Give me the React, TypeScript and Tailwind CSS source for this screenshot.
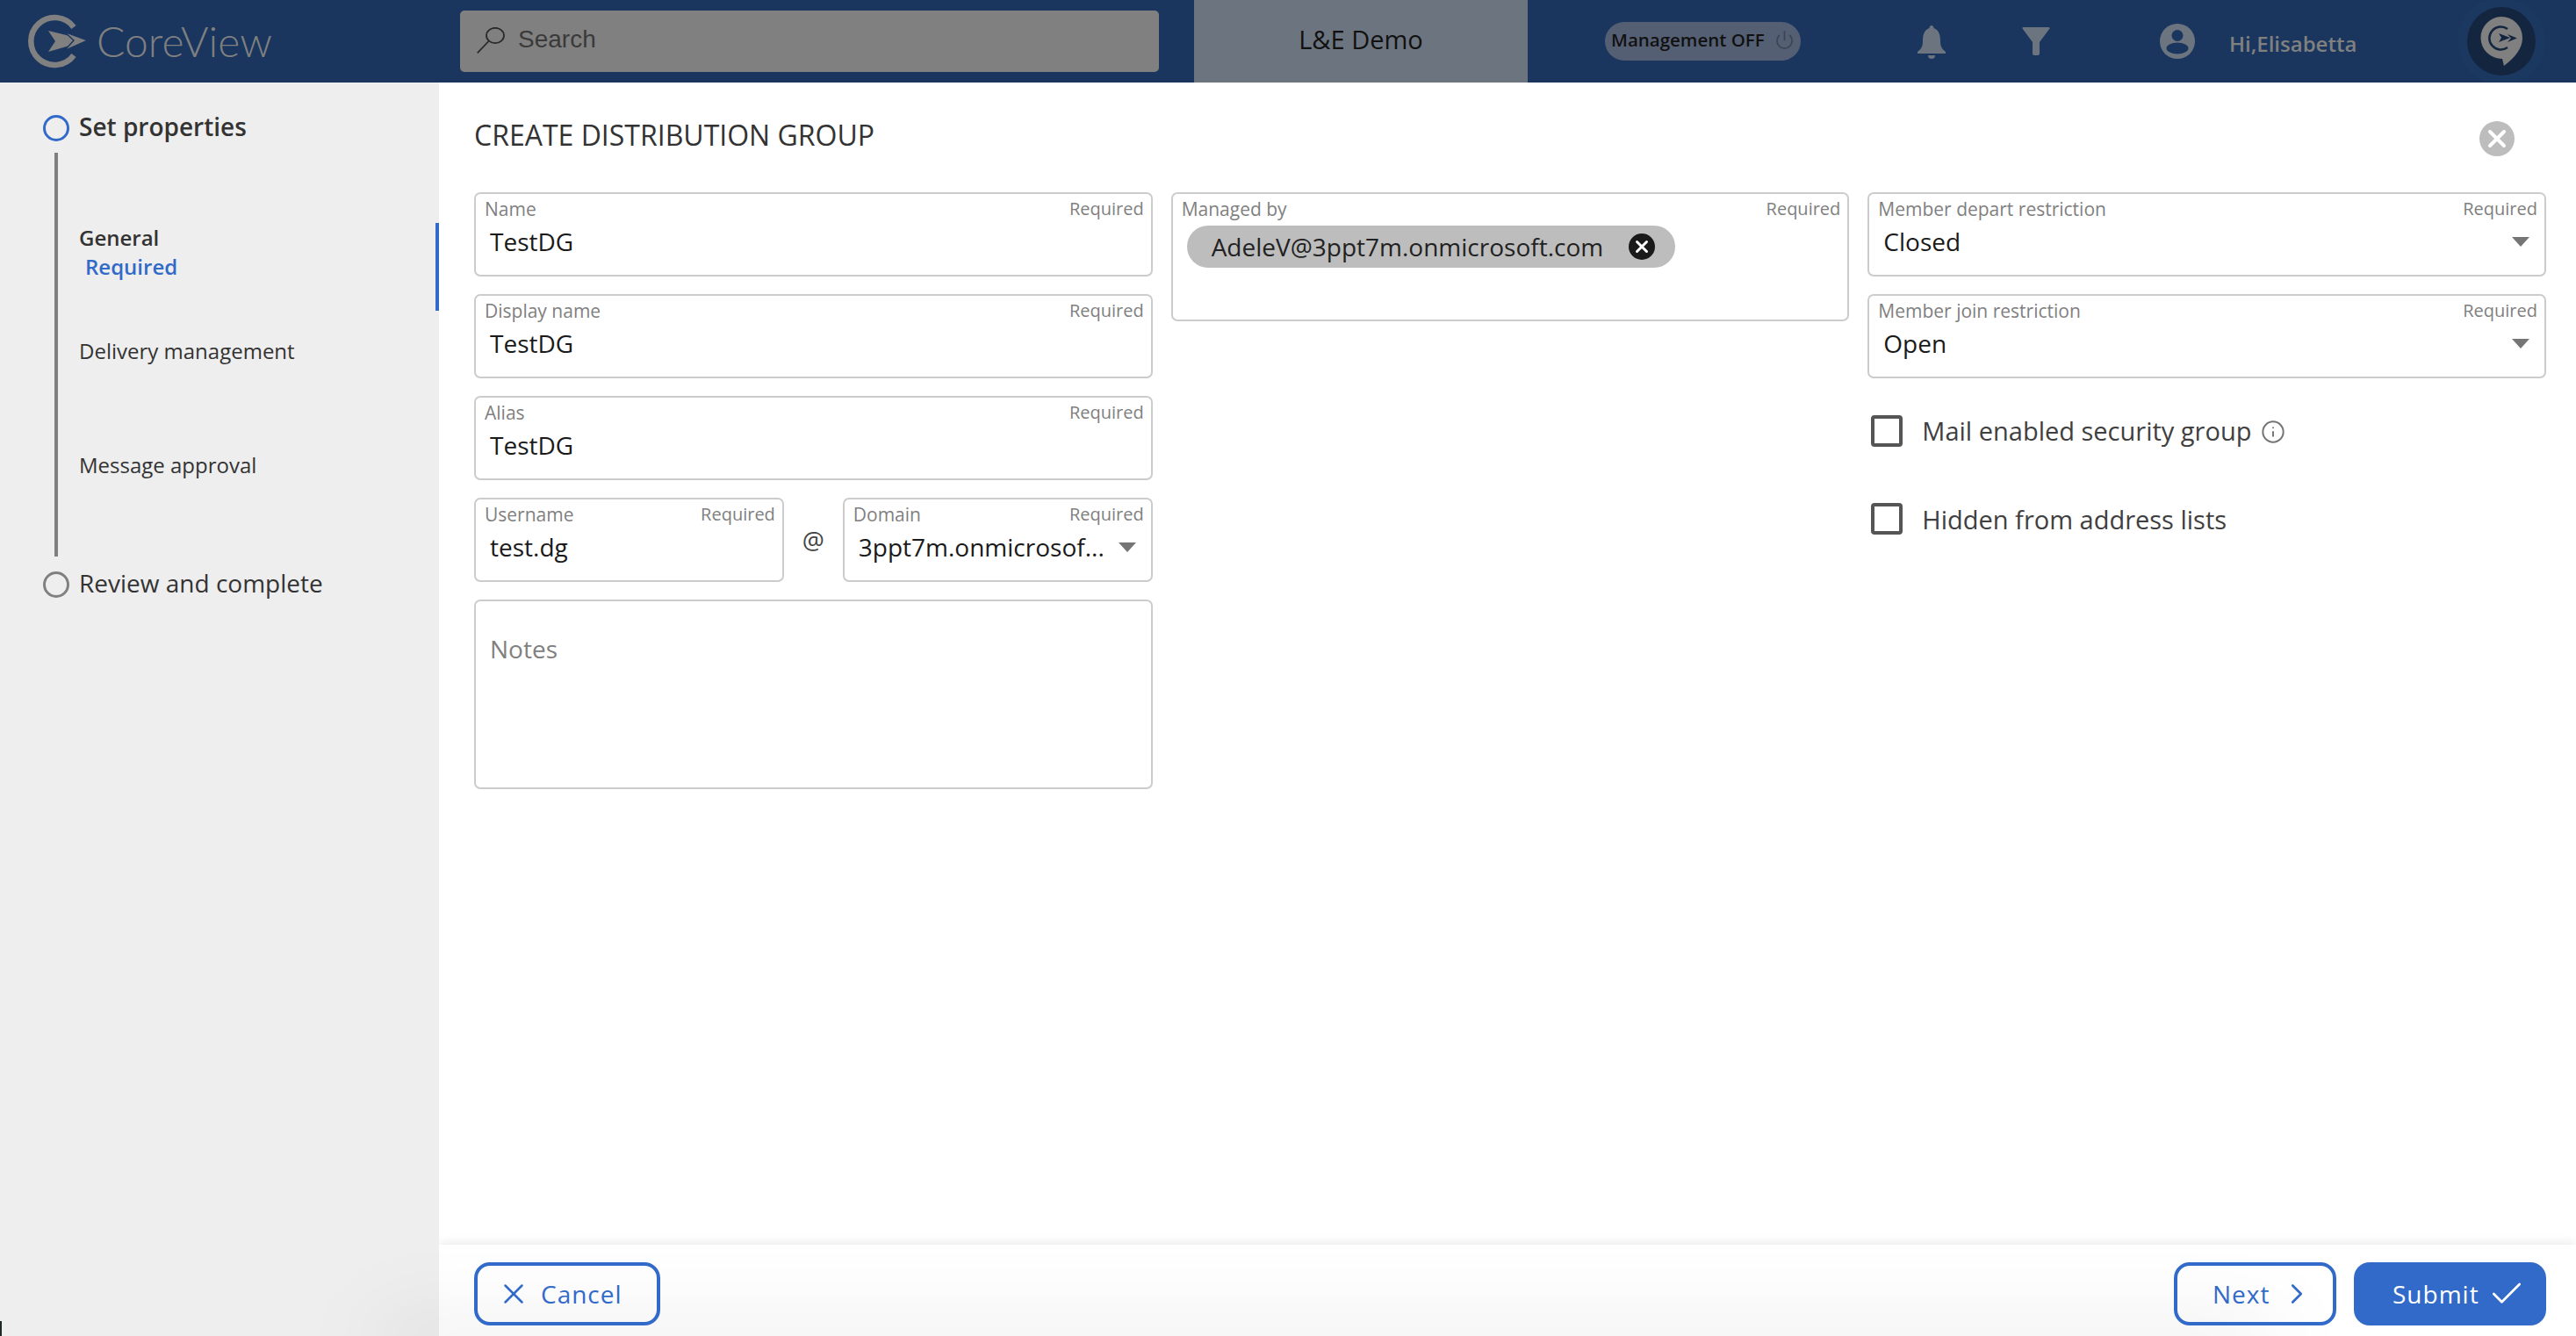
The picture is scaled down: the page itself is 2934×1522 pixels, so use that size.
import { Power, X, ChevronRight, Check, Info } from "lucide-react";

function CoreViewLogo() {
  return (
    <svg width="72" height="64" viewBox="30 12 72 64" className="shrink-0">
      <path d="M84 28 A27 27 0 1 0 84 60" fill="none" stroke="#808080" strokeWidth="6.5" />
      <path d="M55 32 L100 43 L55 56 L63 44 Z" fill="#808080" />
      <path d="M73 33 L100 43 L73 55 L84 43 Z" fill="#808080" stroke="#1a365f" strokeWidth="1.5" />
    </svg>
  );
}

function ChatLogo() {
  return (
    <svg width="48" height="56" viewBox="0 0 48 56">
      <path d="M24 0 A24 24 0 0 1 48 24 C48 36 40 46 27 56 L25 48 A24 24 0 0 1 24 0 Z" fill="#808080" />
      <path d="M31 14 A13 13 0 1 0 31 35" fill="none" stroke="#14253f" strokeWidth="2.5" />
      <path d="M21 19 L34 24 L21 29 L24 24 Z" fill="#14253f" />
      <path d="M31 20 L42 24.500 L31 29 L35 24.500 Z" fill="#14253f" />
    </svg>
  );
}

function SearchGlass() {
  return (
    <svg width="32" height="30" viewBox="0 0 32 30" fill="none" stroke="#2a2a2a" strokeWidth="1.8" className="shrink-0">
      <ellipse cx="21" cy="9.500" rx="10" ry="8.700" />
      <path d="M13.500 16 L0.800 29.300" />
    </svg>
  );
}

function Bell() {
  return (
    <svg width="32" height="39" viewBox="0 0 32 39" fill="#6c757f">
      <path d="M13.500 4 C13.500 0 18.500 0 18.500 4 C24.500 6 26 12 26 19 C26 25 28 28 32 31 L32 33 L0 33 L0 31 C4 28 6 25 6 19 C6 12 7.500 6 13.500 4 Z" />
      <path d="M12 35 h8 a4 4 0 0 1 -8 0 Z" />
    </svg>
  );
}

function Funnel() {
  return (
    <svg width="32" height="32" viewBox="0 0 32 32" fill="#6c757f">
      <path d="M1.500 0 H30.500 Q32 0 31.500 1.500 L20 17 V30 Q20 32 18 32 H14 Q12 32 12 30 V17 L0.500 1.500 Q0 0 1.500 0 Z" />
    </svg>
  );
}

function UserBadge() {
  return (
    <svg width="40" height="40" viewBox="0 0 40 40">
      <circle cx="20" cy="20" r="20" fill="#6c757f" />
      <circle cx="20" cy="13.500" r="6.500" fill="#1a365f" />
      <ellipse cx="20" cy="28" rx="12.500" ry="6.500" fill="#1a365f" />
    </svg>
  );
}

function Caret() {
  return (
    <span className="h-0 w-0 shrink-0 border-x-[10px] border-t-[11px] border-x-transparent border-t-[#757575]" />
  );
}

function FieldHead({ label, required = true }: { label: string; required?: boolean }) {
  return (
    <div className="flex items-center justify-between pl-[10px] pr-[8px] pt-[2px] text-[21px] leading-[30px] text-[#808080]">
      <span>{label}</span>
      {required && <span className="text-[20px]">Required</span>}
    </div>
  );
}

function Field({ label, value, select }: { label: string; value: string; select?: boolean }) {
  return (
    <div className="flex h-[96px] flex-col rounded-[7px] border-2 border-[#cccccc] bg-white">
      <FieldHead label={label} />
      <div className="flex items-center justify-between pl-[16px] pr-[17px] pt-[3px] text-[28px] leading-[38px] text-[#1a1a1a]">
        <span>{value}</span>
        {select && <Caret />}
      </div>
    </div>
  );
}

function CheckRow({ label, info }: { label: string; info?: boolean }) {
  return (
    <div className="flex items-center pl-[4px]">
      <span className="h-[36px] w-[36px] rounded-[4px] border-[4px] border-[#555555] bg-white" />
      <span className="ml-[22px] text-[29px] text-[#404040]">{label}</span>
      {info && <Info className="ml-[11px] mt-[2px] h-[28px] w-[28px] text-[#757575]" strokeWidth={1.7} />}
    </div>
  );
}

export default function App() {
  return (
    <div className="relative flex h-[1522px] w-[2934px] flex-col overflow-hidden bg-white font-['Open_Sans',sans-serif]">
      <header className="flex h-[94px] shrink-0 items-center overflow-hidden bg-[#1a365f]">
        <div className="flex w-[524px] items-center pl-[30px]">
          <CoreViewLogo />
          <span className="ml-[8px] font-['Lato',sans-serif] text-[48px] font-light leading-none text-[#808080]">CoreView</span>
        </div>
        <div className="flex h-[70px] w-[796px] items-center rounded-[5px] bg-[#808080] pb-[2px] pl-[19px] font-['Liberation_Sans',sans-serif] text-[28px] text-[#3a3a3a]">
          <SearchGlass />
          <span className="mb-[2px] ml-[15px]">Search</span>
        </div>
        <div className="ml-[40px] flex h-full w-[380px] items-center justify-center bg-[#6c757f] pb-[5px] text-[29px] text-[#111111]">L&amp;E Demo</div>
        <div className="ml-[88px] flex h-[44px] w-[223px] items-center rounded-full bg-[#545f74] pb-[4px] pl-[7px] text-[20.500px] font-semibold text-[#111111]">
          <span className="whitespace-nowrap">Management OFF</span>
          <Power className="ml-[11px] h-[23px] w-[23px] text-[#3c4554]" strokeWidth={1.8} />
        </div>
        <div className="ml-[133px]"><Bell /></div>
        <div className="ml-[87px]"><Funnel /></div>
        <div className="ml-[125px]"><UserBadge /></div>
        <span className="ml-[39px] mt-[6px] w-[271px] text-[24px] font-semibold text-[#808080]">Hi,Elisabetta</span>
        <div className="flex h-[78px] w-[78px] items-center justify-center rounded-full bg-[#14253f] shadow-[0_0_0_11px_#1b3860]">
          <ChatLogo />
        </div>
      </header>

      <div className="flex min-h-0 flex-1">
        <aside className="relative flex w-[500px] shrink-0 flex-col bg-[#eeeeee] pl-[49px] pt-[37px] text-[#333333]">
          <div className="flex h-[30px] items-center">
            <span className="h-[30px] w-[30px] rounded-full border-[3px] border-[#316ac8]" />
            <span className="mb-[4px] ml-[11px] text-[28px] font-semibold leading-none">Set properties</span>
          </div>
          <div className="ml-[13px] mt-[13px] h-[460px] w-[4px] bg-[#808080]" />
          <div className="mt-[17px] flex h-[30px] items-center">
            <span className="h-[30px] w-[30px] rounded-full border-[3px] border-[#808080]" />
            <span className="mb-[4px] ml-[11px] text-[28px] leading-none">Review and complete</span>
          </div>
          {/* sub steps sit on top of the connector line */}
          <div className="absolute left-[90px] top-[160px] text-[24px] leading-[34px]">
            <div className="font-semibold">General</div>
            <div className="-mt-[1px] ml-[7px] font-semibold text-[#316ac8]">Required</div>
            <div className="mt-[62px]">Delivery management</div>
            <div className="mt-[96px]">Message approval</div>
          </div>
          <span className="absolute right-0 top-[160px] h-[100px] w-[4px] bg-[#316ac8]" />
        </aside>

        <main className="flex min-w-0 flex-1 flex-col">
          <div className="min-h-0 flex-1 pl-[40px] pr-[34px]">
            <div className="flex h-[125px] items-start justify-between pt-[38px]">
              <h1 className="text-[32px] leading-[44px] text-[#333333]">CREATE DISTRIBUTION GROUP</h1>
              <span className="mr-[36px] mt-[6px] flex h-[40px] w-[40px] items-center justify-center rounded-full bg-[#bdbdbd]">
                <X className="h-[32px] w-[32px] text-white" strokeWidth={3} />
              </span>
            </div>
            <div className="grid grid-cols-3 gap-x-[21px]">
              <div className="flex flex-col gap-[20px]">
                <Field label="Name" value="TestDG" />
                <Field label="Display name" value="TestDG" />
                <Field label="Alias" value="TestDG" />
                <div className="flex items-start">
                  <div className="w-[353px]"><Field label="Username" value="test.dg" /></div>
                  <span className="flex h-[96px] w-[67px] items-center justify-center text-[28px] text-[#444444]">@</span>
                  <div className="w-[353px]"><Field label="Domain" value="3ppt7m.onmicrosof..." select /></div>
                </div>
                <div className="h-[216px] rounded-[7px] border-2 border-[#cccccc] pl-[16px] pt-[35px] text-[28px] leading-[38px] text-[#808080]">Notes</div>
              </div>
              <div>
                <div className="h-[147px] rounded-[7px] border-2 border-[#cccccc] bg-white">
                  <FieldHead label="Managed by" />
                  <div className="ml-[16px] mt-[4px] flex h-[48px] w-[556px] items-center rounded-full bg-[#bdbdbd] pl-[28px] text-[28px] text-[#222222]">
                    <span className="mb-[1px]">AdeleV@3ppt7m.onmicrosoft.com</span>
                    <span className="ml-[29px] flex h-[30px] w-[30px] items-center justify-center rounded-full bg-[#1a1a1a]">
                      <X className="h-[22px] w-[22px] text-white" strokeWidth={3.2} />
                    </span>
                  </div>
                </div>
              </div>
              <div className="flex flex-col gap-[20px]">
                <Field label="Member depart restriction" value="Closed" select />
                <Field label="Member join restriction" value="Open" select />
                <div className="mt-[18px]"><CheckRow label="Mail enabled security group" info /></div>
                <div className="mt-[37px]"><CheckRow label="Hidden from address lists" /></div>
              </div>
            </div>
          </div>

          <footer className="flex h-[104px] shrink-0 items-start justify-between bg-white pl-[40px] pr-[34px] pt-[20px] text-[28px] tracking-[1px] shadow-[0_-3px_10px_rgba(0,0,0,0.08)]">
            <button className="relative z-20 flex h-[72px] w-[212px] items-center rounded-[18px] border-[4px] border-[#316ac8] pl-[22px] text-[#316ac8]">
              <X className="h-[38px] w-[38px]" strokeWidth={1.6} />
              <span className="ml-[12px]">Cancel</span>
            </button>
            <div className="relative z-20 flex gap-[20px]">
              <button className="flex h-[72px] w-[185px] items-center rounded-[18px] border-[4px] border-[#316ac8] pl-[40px] text-[#316ac8]">
                <span>Next</span>
                <ChevronRight className="ml-[12px] h-[38px] w-[38px]" strokeWidth={1.7} />
              </button>
              <button className="flex h-[72px] w-[219px] items-center rounded-[18px] bg-[#316ac8] pl-[44px] text-white">
                <span>Submit</span>
                <Check className="ml-[9px] h-[44px] w-[44px]" strokeWidth={1.5} />
              </button>
            </div>
          </footer>
        </main>
      </div>

      {/* window drop shadow bleeding in along the bottom edge */}
      <span className="absolute left-[430px] right-[344px] top-full z-10 h-[10px] shadow-[0_0_90px_rgba(0,0,0,0.36)]" />
      <span className="absolute bottom-0 left-0 z-10 h-[17px] w-[2px] bg-[#1c2a22]" />
    </div>
  );
}
